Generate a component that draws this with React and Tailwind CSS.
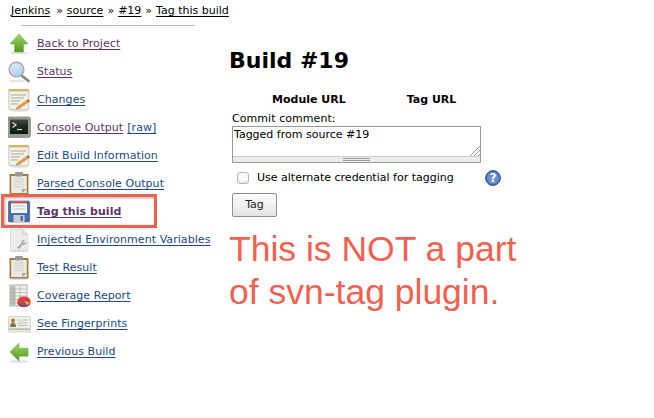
const Shadow = ({ y = 22.5, cx = 12 }) => <ellipse cx={cx} cy={y} rx="9.500" ry="1.300" fill="#000" opacity=".12" />;

const Icons = {
  up: (
    <svg viewBox="0 0 24 24" className="w-6 h-6">
      <defs><linearGradient id="gu" x1="0" y1="0" x2="0" y2="1"><stop offset="0" stopColor="#a4d868" /><stop offset="1" stopColor="#4d9a1c" /></linearGradient></defs>
      <Shadow y="20.800" cx="11" />
      <path d="M11 2 20 12h-4.500v8h-9v-8H2z" fill="url(#gu)" stroke="#66a532" strokeWidth=".5" />
    </svg>
  ),
  left: (
    <svg viewBox="0 0 24 24" className="w-6 h-6">
      <defs><linearGradient id="gl" x1="0" y1="0" x2="0" y2="1"><stop offset="0" stopColor="#a4d868" /><stop offset="1" stopColor="#4d9a1c" /></linearGradient></defs>
      <Shadow y="21.500" cx="11" />
      <path d="M2 12 11 3v5.200h9v8h-9V21z" fill="url(#gl)" stroke="#66a532" strokeWidth=".5" />
    </svg>
  ),
  search: (
    <svg viewBox="0 0 24 24" className="w-6 h-6">
      <defs><linearGradient id="gs" x1="0" y1="0" x2="1" y2="1"><stop offset="0" stopColor="#e6f0fb" /><stop offset="1" stopColor="#a9c8ec" /></linearGradient></defs>
      <ellipse cx="9" cy="21" rx="8.500" ry="1.300" fill="#000" opacity=".1" />
      <path d="M13.500 15.500 20.500 21" stroke="#85858a" strokeWidth="2.800" strokeLinecap="round" />
      <circle cx="8.500" cy="9.500" r="7.300" fill="url(#gs)" stroke="#a5a9b0" strokeWidth="1.500" />
    </svg>
  ),
  notepad: (
    <svg viewBox="1 0 24 24" className="w-6 h-6">
      <Shadow y="22.500" />
      <rect x="1.800" y="1.500" width="20" height="20" rx="1" fill="#f3f1e6" stroke="#b4b4ac" strokeWidth=".7" />
      <rect x="1.800" y="1" width="20" height="2.400" fill="#d0b866" />
      <path d="M4 7h15M4 10h13M4 13h9M4 16h7" stroke="#a9a9a0" strokeWidth="1" />
      <path d="M10 19 21 11.500l1.500 2L12 20.500l-2.600.6z" fill="#e8a23c" stroke="#a8662a" strokeWidth=".4" />
      <path d="M20 12.200 21.500 11.200l1.400 2-1.400 1z" fill="#d94b3a" />
    </svg>
  ),
  terminal: (
    <svg viewBox="1 0 24 24" className="w-6 h-6">
      <defs><linearGradient id="gt" x1="0" y1="0" x2="0" y2="1"><stop offset="0" stopColor="#3d4c3f" /><stop offset=".5" stopColor="#1c2a20" /><stop offset="1" stopColor="#0f1a12" /></linearGradient></defs>
      <rect x=".5" y="1" width="23" height="20.500" rx="2" fill="#9a9b92" stroke="#77786f" strokeWidth=".6" />
      <rect x="3" y="3.500" width="18" height="14.500" fill="url(#gt)" />
      <path d="M5.500 6.500 9 9l-3.500 2.500" stroke="#e5eee2" strokeWidth="1.100" fill="none" />
      <path d="M10 13.500h5" stroke="#e5eee2" strokeWidth="1.100" />
    </svg>
  ),
  clipboard: (
    <svg viewBox="1 0 24 24" className="w-6 h-6">
      <Shadow y="23" />
      <rect x="2.500" y="2" width="19" height="20.500" fill="#a97a3c" />
      <rect x="4.200" y="4" width="15.600" height="17" fill="#e9e9e5" />
      <path d="M7 7h10M7 9.500h10M7 12h10M7 14.500h10" stroke="#d2d2cc" strokeWidth="1" />
      <path d="M15 21v-4h4.800z" fill="#a8a8a2" />
      <rect x="8" y="0" width="8" height="4.500" rx="1" fill="#9b9b96" />
    </svg>
  ),
  floppy: (
    <svg viewBox="1 0 24 24" className="w-6 h-6">
      <rect x="1.300" y="1" width="21.400" height="21" rx="1.500" fill="#4e6ea8" stroke="#3a5488" strokeWidth=".6" />
      <rect x="4" y="1.500" width="16" height="11.500" fill="#f4f4f6" />
      <rect x="4" y="1.500" width="16" height="1.800" fill="#d6423a" />
      <path d="M6 6h12M6 9h12" stroke="#bfc6d4" strokeWidth="1" />
      <rect x="6.500" y="15" width="11" height="7" fill="#c9cdd4" />
      <rect x="13.500" y="16" width="2.500" height="5" fill="#4e6ea8" />
    </svg>
  ),
  doc: (
    <svg viewBox="1 0 24 24" className="w-6 h-6">
      <Shadow y="23" />
      <path d="M3.500 1h12L21 6.500V22.500H3.500z" fill="#ececec" stroke="#d4d4d4" strokeWidth=".7" />
      <path d="M15.500 1v5.500H21" fill="#dcdcdc" stroke="#cfcfcf" strokeWidth=".6" />
      <path d="M10 19.500 14.500 15a2.500 2.500 0 0 1 3.500-3l-2 2 1.200 1.200 2-1.500a2.500 2.500 0 0 1-3.500 2.800L12 21z" fill="#a8a8a8" />
    </svg>
  ),
  coverage: (
    <svg viewBox="1 0 24 24" className="w-6 h-6">
      <rect x="3" y="1" width="17" height="21" fill="#efefec" stroke="#9b9b96" strokeWidth=".8" />
      <path d="M3 5h16M3 8.500h16M3 12h16M3 15.500h16M3 19h16M8 2v19M13 2v19" stroke="#b4b4ae" strokeWidth=".8" />
      <rect x="3.500" y="2" width="4.500" height="19" fill="#8e8e88" opacity=".45" />
      <ellipse cx="17" cy="18.500" rx="6.500" ry="4.500" fill="#9f1d1d" />
      <ellipse cx="17" cy="17" rx="6.500" ry="4.500" fill="#e63c3c" />
      <path d="M17 17 20 21.500l3-3z" fill="#e0b93c" />
      <path d="M17 17 14.500 21.500h5.500z" fill="#3f6fbf" />
    </svg>
  ),
  fingerprint: (
    <svg viewBox="0 0 24 24" className="w-6 h-6">
      <rect x=".5" y="4.500" width="22" height="15.500" rx="1" fill="#efefe8" stroke="#c4c4bc" strokeWidth=".7" />
      <circle cx="5" cy="8.500" r="2" fill="#a67a3a" />
      <path d="M2 15c0-3 1.500-4.500 3-4.500s3 1.500 3 4.500z" fill="#6f7f3a" />
      <path d="M10 8h3M14.500 8h5M10 11h9.500M10 13.500h9.500" stroke="#b9b9b0" strokeWidth="1" />
      <rect x="1.200" y="16.500" width="20.500" height="1.300" fill="#a9a99f" />
    </svg>
  ),
  help: (
    <svg viewBox="0 0 16 16" className="w-4 h-4">
      <circle cx="8" cy="8" r="7.400" fill="#4a78c2" stroke="#24508f" strokeWidth="1" />
      <circle cx="8" cy="8" r="5.800" fill="#fff" opacity=".18" />
      <text x="8" y="12" textAnchor="middle" fontSize="11.500" fontWeight="700" fill="#fff" fontFamily="'DejaVu Sans', sans-serif">?</text>
    </svg>
  ),
};

const items = [
  { icon: "up", label: "Back to Project", visited: true },
  { icon: "search", label: "Status", visited: true },
  { icon: "notepad", label: "Changes" },
  { icon: "terminal", label: "Console Output", visited: true, raw: true },
  { icon: "notepad", label: "Edit Build Information" },
  { icon: "clipboard", label: "Parsed Console Output" },
  { icon: "floppy", label: "Tag this build", visited: true, active: true },
  { icon: "doc", label: "Injected Environment Variables" },
  { icon: "clipboard", label: "Test Result" },
  { icon: "coverage", label: "Coverage Report" },
  { icon: "fingerprint", label: "See Fingerprints" },
  { icon: "left", label: "Previous Build" },
];

function Row({ item }) {
  const color = item.visited ? "text-[#5c3566]" : "text-[#204a87]";
  return (
    <div className="relative h-7 flex items-center pl-[8px] gap-[5px] shrink-0 tracking-[0.06px]">
      {item.active && (
        <div className="absolute left-[1px] top-[-4px] w-[156px] h-[34px] border-[3px] border-[#f4604f] shadow-[inset_1px_1px_3px_rgba(0,0,0,0.35)]" />
      )}
      {Icons[item.icon]}
      <a className={`underline underline-offset-[2px] whitespace-nowrap ${color} ${item.active ? "font-bold" : ""}`}>{item.label}</a>
      {item.raw && <a className="underline underline-offset-[2px] text-[#204a87] ml-[-1px]">[raw]</a>}
    </div>
  );
}

export default function App() {
  return (
    <div className="w-[654px] h-[418px] bg-white overflow-hidden relative text-[11px] leading-[14px] text-black font-['DejaVu_Sans',sans-serif]">
      <div className="pl-[11px] pt-[4px] h-[25px] flex gap-[4px]">
        <span className="underline underline-offset-[2px] mr-[2px]">Jenkins</span><span>»</span>
        <span className="underline underline-offset-[2px]">source</span><span>»</span>
        <span className="underline underline-offset-[2px]">#19</span><span>»</span>
        <span className="underline underline-offset-[2px]">Tag this build</span>
      </div>
      <div className="ml-[21px] w-[174px] h-px bg-[#bbbbbb]" />
      <div className="flex">
        <div className="w-[229px] pt-[4px] flex flex-col shrink-0">
          {items.map((item) => <Row key={item.label} item={item} />)}
        </div>
        <div className="flex-1 pt-[22px]">
          <h1 className="text-[22px] leading-[26px] font-bold">Build #19</h1>
          <div className="flex font-bold mt-[19px] h-[14px]">
            <span className="ml-[43px]">Module URL</span>
            <span className="ml-[61px]">Tag URL</span>
          </div>
          <div className="mt-[5px] ml-[3px] tracking-[0.06px]">Commit comment:</div>
          <div className="relative ml-[3px] w-[249px] h-[37px] border border-[#999999]">
            <div className="pl-[1px] pt-[1px]">Tagged from source #19</div>
            <div className="absolute left-0 right-0 bottom-0 h-[6px] bg-[#ececec] border-t border-[#cccccc] flex justify-center items-center">
              <div className="w-[27px] h-[3px] border-y border-[#999999]" />
            </div>
            <svg viewBox="0 0 12 12" className="absolute right-0 bottom-[6px] w-3 h-3">
              <path d="M2 12 12 2M6 12l6-6M10 12l2-2" stroke="#999" strokeWidth="1" />
            </svg>
          </div>
          <div className="flex items-center mt-[6px] h-[17px] ml-[8px]">
            <span className="w-[12px] h-[12px] rounded-[3px] border border-[#b5b5b5] bg-[#fafafa] shadow-[inset_0_-2px_2px_rgba(0,0,0,0.08)]" />
            <span className="ml-[8px]">Use alternate credential for tagging</span>
            <span className="ml-[31px]">{Icons.help}</span>
          </div>
          <button className="block mt-[7px] ml-[3px] w-[45px] h-[24px] rounded-[2px] border border-[#8f8f8f] bg-gradient-to-b from-[#ffffff] to-[#e2e2e2] text-[11px] text-[#222]">Tag</button>
          <p className="mt-[11px] text-[35.5px] leading-[43px] text-[#f4604f] font-['Liberation_Sans',Arial,sans-serif]">
            This is NOT a part<br />of svn-tag plugin.
          </p>
        </div>
      </div>
    </div>
  );
}
